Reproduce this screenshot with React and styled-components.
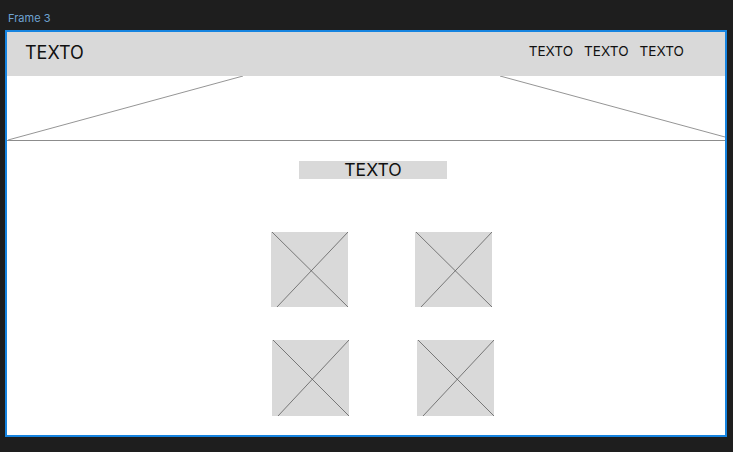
import React from 'react';
import styled, { createGlobalStyle } from 'styled-components';

const Global = createGlobalStyle`
  html, body {
    margin: 0;
    padding: 0;
    background: #1e1e1e;
  }
  body {
    width: 733px;
    height: 452px;
    overflow: hidden;
    font-family: Inter, "Liberation Sans", sans-serif;
  }
`;

const Canvas = styled.div`
  padding: 10px 0 0 5px;
`;

const FrameLabel = styled.div`
  margin-left: 3px;
  height: 20px;
  font-size: 11px;
  line-height: 16px;
  color: #6fa3d2;
`;

const Frame = styled.div`
  width: 718px;
  height: 403px;
  border: 2px solid #1684e0;
  background: #ffffff;
  display: flex;
  flex-direction: column;
  overflow: hidden;
`;

const Header = styled.header`
  height: 44px;
  background: #d9d9d9;
  display: flex;
  align-items: center;
  justify-content: space-between;
  padding: 0 41px 0 18px;
  color: #111;
`;

const Brand = styled.div`
  font-size: 18px;
  line-height: 20px;
  margin-top: -2px;
`;

const Nav = styled.nav`
  display: flex;
  gap: 11px;
  margin-top: -7px;
`;

const NavItem = styled.span`
  font-size: 13.6px;
  line-height: 16px;
`;

const Hero = styled.div`
  height: 64px;
  border-bottom: 1px solid #8c8c8c;
  svg {
    display: block;
  }
`;

const Content = styled.section`
  display: flex;
  flex-direction: column;
  padding: 20px 0 0 264px;
`;

const Title = styled.div`
  margin-left: 28px;
  width: 148px;
  height: 18px;
  background: #d9d9d9;
  text-align: center;
  font-size: 17.6px;
  line-height: 18px;
  color: #111;
`;

const Gallery = styled.div`
  margin-top: 53px;
  display: grid;
  grid-template-columns: 77px 77px;
  column-gap: 67px;
  row-gap: 33px;
`;

const Tile = styled.div`
  width: 77px;
  height: ${p => p.$tall ? 76 : 75}px;
  margin-left: ${p => p.$nudge || 0}px;
  background: #d9d9d9;
  svg {
    display: block;
  }
`;

const Placeholder = ({ nudge, tall }) => (
  <Tile $nudge={nudge} $tall={tall}>
    <svg width="77" height={tall ? 76 : 75} viewBox="0 0 77 75" preserveAspectRatio="none">
      <line x1="1" y1="0" x2="77" y2="75" stroke="#5e5e5e" strokeWidth="0.8" />
      <line x1="77" y1="0" x2="6" y2="75" stroke="#5e5e5e" strokeWidth="0.8" />
    </svg>
  </Tile>
);

export default function App() {
  return (
    <Canvas>
      <Global />
      <FrameLabel>Frame 3</FrameLabel>
      <Frame>
        <Header>
          <Brand>TEXTO</Brand>
          <Nav>
            <NavItem>TEXTO</NavItem>
            <NavItem>TEXTO</NavItem>
            <NavItem>TEXTO</NavItem>
          </Nav>
        </Header>
        <Hero>
          <svg width="718" height="64" viewBox="0 0 718 64">
            <line x1="1" y1="64" x2="236" y2="0" stroke="#7a7a7a" strokeWidth="0.8" />
            <line x1="493" y1="0" x2="718" y2="61" stroke="#7a7a7a" strokeWidth="0.8" />
          </svg>
        </Hero>
        <Content>
          <Title>TEXTO</Title>
          <Gallery>
            <Placeholder />
            <Placeholder />
            <Placeholder nudge={1} tall />
            <Placeholder nudge={2} tall />
          </Gallery>
        </Content>
      </Frame>
    </Canvas>
  );
}
